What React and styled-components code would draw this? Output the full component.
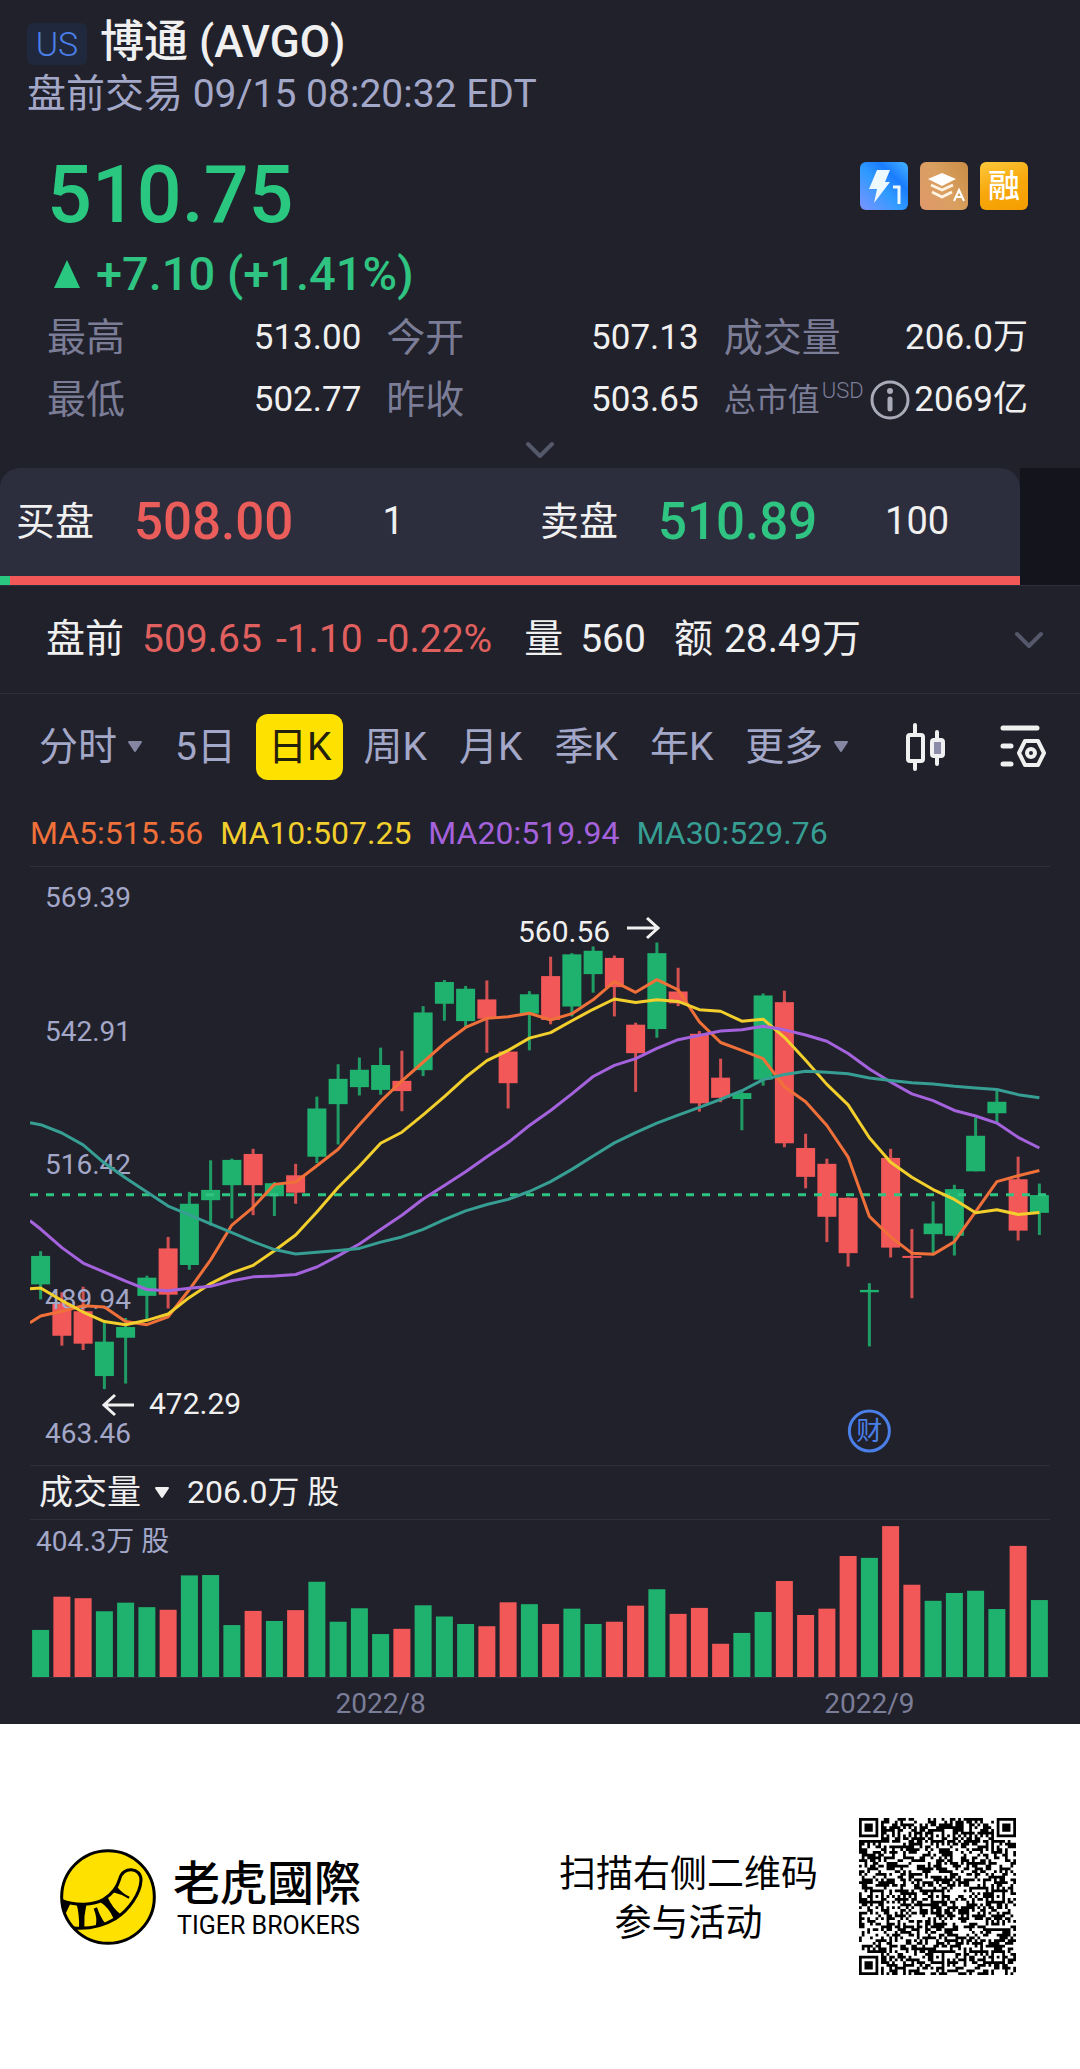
import React, { useState } from "react";
import styled, { createGlobalStyle } from "styled-components";

const GlobalStyle = createGlobalStyle`
  * {
    box-sizing: border-box;
  }
  body {
    margin: 0;
    background: #fff;
    font-family: Roboto, "Noto Sans CJK SC", sans-serif;
    font-weight: 400;
    line-height: 1.2;
    color: #f0f0f0;
  }
  button, select {
    font: inherit;
    color: inherit;
    border: 0;
    padding: 0;
    background: none;
    cursor: pointer;
  }
  svg {
    display: block;
  }
`;

const GREEN = "#1fb26e";
const RED = "#f25858";

/* ---------- header ---------- */

const Quote = styled.main`
  background: #21212b;
`;

const Header = styled.header`
  padding: 14px 27px 0;
`;

const TitleRow = styled.div`
  display: flex;
  align-items: center;
  gap: 13px;
  height: 56px;
`;

const Market = styled.span`
  width: 60px;
  height: 42px;
  margin-top: 4px;
  border-radius: 6px;
  background: #20283d;
  color: #4a7fe8;
  font-size: 34px;
  font-weight: 300;
  line-height: 42px;
  text-align: center;
`;

const Title = styled.h1`
  margin: 0;
  font-size: 44px;
  font-weight: 500;
  line-height: 56px;
`;

const Session = styled.div`
  color: #a3a7c8;
  font-size: 39px;
  line-height: 48px;
`;

const Summary = styled.section`
  padding: 28px 52px 0 47px;
`;

const PriceRow = styled.div`
  display: flex;
  justify-content: space-between;
  align-items: flex-start;
`;

const Price = styled.div`
  color: #2ac780;
  font-size: 79px;
  font-weight: 500;
  line-height: 98px;
`;

const Badges = styled.div`
  display: flex;
  gap: 12px;
  margin-top: 16px;
`;

const Badge = styled.span`
  width: 48px;
  height: 48px;
  border-radius: 6px;
  overflow: hidden;
  background: ${(p) => p.$fill};
  color: #fff;
  font-size: 32px;
  font-weight: 500;
  line-height: 48px;
  text-align: center;
`;

const Change = styled.div`
  display: flex;
  align-items: center;
  gap: 16px;
  margin-top: 2px;
  padding-left: 7px;
  color: #2fc481;
  font-size: 47px;
  font-weight: 500;
  line-height: 56px;
`;

const Stats = styled.dl`
  display: grid;
  grid-template-columns: 314fr 312fr 304fr;
  column-gap: 25px;
  margin: 5px 0 0;
`;

const Stat = styled.div`
  display: flex;
  align-items: center;
  justify-content: space-between;
  height: 62px;
  white-space: nowrap;
`;

const StatName = styled.dt`
  display: flex;
  align-items: center;
  gap: 2px;
  color: #7b7d97;
  font-size: ${(p) => (p.$small ? 32 : 39)}px;
`;

const Currency = styled.sup`
  align-self: flex-start;
  font-size: 22px;
  font-weight: 300;
  line-height: 22px;
  margin-right: 4px;
`;

const StatValue = styled.dd`
  margin: 0;
  font-size: 35px;
`;

const ExpandRow = styled.div`
  display: flex;
  justify-content: center;
  height: 37px;
`;

/* ---------- bid / ask ---------- */

const Depth = styled.section`
  background: #13141c;
  padding-right: 60px;
`;

const DepthPanel = styled.div`
  display: grid;
  grid-template-columns: 524fr 480fr;
  height: 108px;
  padding-left: 16px;
  border-radius: 20px 20px 0 0;
  background: #2d2e3d;
`;

const DepthCorner = styled.div`
  background: #21212b;
`;

const Side = styled.div`
  display: flex;
  align-items: center;
  font-size: 39px;
  white-space: nowrap;
`;

const SidePrice = styled.span`
  margin-left: 40px;
  color: ${(p) => (p.$up ? "#2fc481" : "#ea5d5b")};
  font-size: 51px;
  font-weight: 500;
`;

const SideSize = styled.span`
  width: 200px;
  font-size: 38px;
  text-align: center;
`;

const Ratio = styled.div`
  height: 9px;
  background: linear-gradient(to right, #2ac780 1%, ${RED} 1%);
`;

/* ---------- pre-market ---------- */

const PreMarket = styled.section`
  display: flex;
  align-items: center;
  height: 109px;
  padding: 0 36px 0 46px;
  border-top: 1px solid #2e2f3c;
  border-bottom: 1px solid #2e2f3c;
  font-size: 39px;
  white-space: nowrap;
`;

const PreValues = styled.span`
  display: flex;
  gap: 14px;
  margin: 0 32px 0 18px;
  color: #e0605f;
`;

const PreField = styled.span`
  display: flex;
  gap: ${(p) => p.$gap}px;
  margin-right: 28px;
`;

const ChevronButton = styled.button`
  display: flex;
  align-items: center;
  justify-content: center;
  width: 30px;
  margin-left: ${(p) => (p.$end ? "auto" : 0)};
`;

/* ---------- period tabs ---------- */

const Tabs = styled.nav`
  display: flex;
  align-items: center;
  gap: 8px;
  padding: 20px 34px 0 27px;
`;

const Tab = styled.button`
  display: flex;
  align-items: center;
  gap: 10px;
  height: 66px;
  padding: 0 12px;
  border-radius: 12px;
  background: ${(p) => (p.$active ? "#ffe100" : "transparent")};
  color: ${(p) => (p.$active ? "#24210a" : "#a3a7c8")};
  font-size: 39px;
  white-space: nowrap;
`;

const Tools = styled.div`
  display: flex;
  align-items: center;
  gap: 54px;
  margin-left: auto;
`;

const Averages = styled.div`
  display: flex;
  align-items: center;
  gap: 17px;
  height: 67px;
  margin: 20px 30px 0;
  border-bottom: 1px solid #2e2f3c;
  font-size: 32px;
  white-space: nowrap;
`;

const Average = styled.span`
  color: ${(p) => p.$color};
`;

/* ---------- charts ---------- */

const Plot = styled.svg`
  width: calc(100% - 60px);
  height: auto;
  margin: 0 30px;
`;

const AxisText = styled.text`
  fill: ${(p) => p.$color || "#a3a7c8"};
  font-size: 28px;
`;

const NoteText = styled.text`
  fill: #f0f0f0;
  font-size: 30px;
`;

const EventText = styled.text`
  fill: #4a7fe8;
  font-size: 26px;
`;

const VolumeHead = styled.div`
  display: flex;
  align-items: center;
  height: 55px;
  margin: 0 30px;
  padding-left: 9px;
  border-top: 1px solid #2e2f3c;
  border-bottom: 1px solid #2e2f3c;
  font-size: 32px;
`;

const VolumeSelect = styled.select`
  appearance: none;
  margin-right: 13px;
  font-size: 34px;
`;

const VolumeNow = styled.span`
  margin-left: 17px;
`;

/* ---------- footer ---------- */

const Footer = styled.footer`
  display: flex;
  align-items: center;
  justify-content: space-between;
  height: 345px;
  padding: 0 64px 0 60px;
  background: #fff;
  color: #000;
`;

const Brand = styled.div`
  display: flex;
  align-items: center;
  gap: 17px;
`;

const BrandText = styled.div`
  padding-top: 6px;
`;

const BrandName = styled.div`
  font-size: 47px;
  font-weight: 500;
  font-family: Roboto, "Noto Sans CJK TC", sans-serif;
  line-height: 52px;
`;

const BrandLatin = styled.div`
  padding-left: 4px;
  font-size: 25px;
  line-height: 32px;
`;

const Scan = styled.div`
  display: flex;
  align-items: center;
  gap: 41px;
  font-size: 37px;
  line-height: 49px;
  text-align: center;
`;

const ScanText = styled.div`
  padding-top: 4px;
`;

/* ---------- data ---------- */

const stats = [
  { name: "最高", value: "513.00" },
  { name: "今开", value: "507.13" },
  { name: "成交量", value: "206.0万" },
  { name: "最低", value: "502.77" },
  { name: "昨收", value: "503.65" },
  { name: "总市值", value: "2069亿", currency: "USD" },
];

const periods = [
  { label: "分时", menu: true },
  { label: "5日" },
  { label: "日K" },
  { label: "周K" },
  { label: "月K" },
  { label: "季K" },
  { label: "年K" },
  { label: "更多", menu: true },
];

// levels count down from the top rule of the chart to the bottom one
const TOP = 16;
const BOTTOM = 1529;
const WIDTH = 1020;
const HEIGHT = 598;

// up, high, body top, body bottom, low
const candles = [
  [1, 988, 1000, 1072, 1110],
  [0, 1092, 1120, 1202, 1227],
  [0, 1078, 1140, 1222, 1238],
  [1, 1170, 1217, 1304, 1337],
  [1, 1157, 1180, 1207, 1323],
  [1, 1050, 1055, 1101, 1165],
  [0, 952, 981, 1098, 1133],
  [1, 838, 868, 1023, 1035],
  [1, 758, 833, 859, 923],
  [1, 754, 757, 821, 905],
  [0, 729, 742, 821, 897],
  [1, 813, 816, 849, 899],
  [0, 767, 796, 840, 868],
  [1, 597, 627, 749, 765],
  [1, 515, 552, 616, 718],
  [1, 498, 529, 573, 594],
  [1, 473, 517, 580, 592],
  [0, 481, 557, 583, 634],
  [1, 368, 384, 530, 545],
  [1, 302, 307, 362, 405],
  [1, 317, 324, 406, 422],
  [0, 303, 351, 400, 486],
  [0, 483, 483, 563, 627],
  [1, 330, 338, 387, 480],
  [0, 243, 292, 403, 414],
  [1, 234, 237, 369, 394],
  [1, 217, 228, 287, 334],
  [0, 240, 246, 320, 394],
  [0, 410, 415, 487, 585],
  [1, 207, 234, 426, 448],
  [0, 271, 331, 361, 368],
  [0, 431, 438, 614, 635],
  [0, 501, 549, 600, 611],
  [1, 580, 588, 603, 682],
  [1, 336, 341, 554, 569],
  [0, 329, 358, 715, 725],
  [0, 691, 727, 800, 829],
  [0, 754, 767, 901, 965],
  [0, 852, 853, 993, 1027],
  [1, 1069, 1086, 1092, 1229],
  [0, 729, 752, 979, 1004],
  [0, 932, 1000, 1005, 1107],
  [1, 862, 918, 945, 996],
  [1, 820, 831, 949, 999],
  [1, 650, 696, 786, 786],
  [1, 582, 610, 639, 662],
  [0, 749, 806, 936, 961],
  [1, 817, 846, 891, 947],
];

// first value is the level at the left edge, then one per candle
const averages = [
  {
    label: "MA5:515.56",
    color: "#f0703a",
    levels: [
      1169, 1152, 1140, 1126, 1129, 1166, 1174, 1154, 1085, 1010, 922, 877, 819,
      813, 772, 730, 668, 609, 557, 510, 462, 422, 399, 395, 386, 403, 387, 352,
      306, 333, 301, 327, 408, 460, 480, 501, 572, 610, 670, 750, 900, 952, 993,
      996, 964, 888, 812, 797, 784,
    ],
  },
  {
    label: "MA10:507.25",
    color: "#f2cf2c",
    levels: [
      1083, 1081, 1113, 1142, 1166, 1174, 1163, 1147, 1105, 1070, 1043, 1024,
      987, 947, 889, 827, 773, 715, 687, 643, 597, 548, 506, 480, 449, 435, 405,
      376, 350, 359, 352, 356, 377, 381, 406, 401, 447, 505, 566, 618, 701, 763,
      801, 832, 857, 891, 883, 895, 890,
    ],
  },
  {
    label: "MA20:519.94",
    color: "#a462dc",
    levels: [
      911, 932, 979, 1018, 1041, 1064, 1085, 1088, 1082, 1077, 1063, 1053, 1051,
      1047, 1028, 1000, 970, 933, 897, 856, 822, 787, 749, 713, 670, 632, 590,
      546, 518, 501, 475, 453, 442, 431, 428, 419, 428, 441, 457, 488, 527, 560,
      590, 607, 632, 646, 664, 700, 727,
    ],
  },
  {
    label: "MA30:529.76",
    color: "#369e93",
    levels: [
      663, 668, 689, 719, 765, 803, 838, 874, 896, 919, 941, 964, 984, 995, 991,
      986, 981, 965, 952, 933, 908, 886, 870, 857, 837, 812, 781, 747, 714, 688,
      664, 644, 624, 604, 582, 554, 541, 533, 535, 539, 550, 556, 562, 565, 571,
      575, 579, 592, 600,
    ],
  },
];

const axis = [
  ["569.39", 116],
  ["542.91", 455],
  ["516.42", 794],
  ["489.94", 1134],
  ["463.46", 1473],
];

// in units of 10,000 shares
const volumes = [
  126, 215, 211, 176, 199, 187, 180, 272, 273, 139, 177, 150, 179, 255, 148,
  184, 115, 129, 192, 162, 142, 136, 200, 195, 142, 183, 142, 148, 191, 235,
  169, 185, 89, 118, 174, 257, 166, 183, 324, 319, 404, 247, 204, 225, 231, 182,
  351, 206,
];

const SLOT = WIDTH / candles.length;
const centerX = (i) => SLOT * (i + 0.5);
const toY = (level) => ((level - TOP) * HEIGHT) / (BOTTOM - TOP);

const Chevron = () => (
  <svg width="30" height="18" viewBox="0 0 30 18" fill="none">
    <path
      d="M3 3l12 12L27 3"
      stroke="#55576a"
      strokeWidth="4"
      strokeLinecap="round"
      strokeLinejoin="round"
    />
  </svg>
);

const Caret = ({ color }) => (
  <svg width="16" height="12" viewBox="0 0 16 12">
    <path
      d="M2 1h12L8 10z"
      fill={color}
      stroke={color}
      strokeWidth="2"
      strokeLinejoin="round"
    />
  </svg>
);

const CandleChart = () => (
  <Plot viewBox={`0 0 ${WIDTH} ${HEIGHT}`} role="img" aria-label="日K">
    {candles.map(([up, high, top, bottom, low], i) => (
      <g key={i} fill={up ? GREEN : RED}>
        <rect
          x={centerX(i) - 1.5}
          y={toY(high)}
          width="3"
          height={toY(low) - toY(high)}
          opacity="0.85"
        />
        <rect
          x={centerX(i) - 9.5}
          y={toY(top)}
          width="19"
          height={toY(bottom) - toY(top)}
        />
      </g>
    ))}
    <path
      d={`M0 ${toY(845)}H1016`}
      stroke="#2fc481"
      strokeWidth="3"
      strokeDasharray="8 8"
    />
    {axis.map(([label, level]) => (
      <AxisText key={label} x="15" y={toY(level)}>
        {label}
      </AxisText>
    ))}
    {averages.map(({ label, color, levels }) => (
      <polyline
        key={label}
        fill="none"
        stroke={color}
        strokeWidth="3"
        strokeLinejoin="round"
        points={levels
          .map((level, i) => `${i ? centerX(i - 1) : 0},${toY(level)}`)
          .join(" ")}
      />
    ))}
    <g fill="none" stroke="#f0f0f0" strokeWidth="3">
      <path d="M597 61h30M617 51l11 10-11 10" />
      <path d="M104 538H74M85 528l-11 10 11 10" />
    </g>
    <NoteText x="488" y="75">
      560.56
    </NoteText>
    <NoteText x="119" y="547">
      472.29
    </NoteText>
    <circle
      cx={centerX(39)}
      cy="564"
      r="20"
      fill="none"
      stroke="#4a7fe8"
      strokeWidth="3"
    />
    <EventText x={centerX(39)} y="573" textAnchor="middle">
      财
    </EventText>
  </Plot>
);

const VolumeChart = () => (
  <Plot viewBox={`0 0 ${WIDTH} 204`} role="img" aria-label="成交量">
    <path d={`M0 157.5H${WIDTH}`} stroke="#2e2f3c" />
    {volumes.map((v, i) => {
      const h = (v / 404.3) * 151;
      return (
        <rect
          key={i}
          x={centerX(i) - 8.5}
          y={157 - h}
          width="17"
          height={h}
          fill={candles[i][0] ? GREEN : RED}
        />
      );
    })}
    <AxisText x="6" y="31">
      404.3万 股
    </AxisText>
    <AxisText x={centerX(16)} y="193" textAnchor="middle" $color="#7b7d97">
      2022/8
    </AxisText>
    <AxisText x={centerX(39)} y="193" textAnchor="middle" $color="#7b7d97">
      2022/9
    </AxisText>
  </Plot>
);

const BoltIcon = () => (
  <svg width="48" height="48" viewBox="0 0 48 48">
    <path d="M17 8h13l-5 12h5L14 41l3-14H9z" fill="#eef8ff" />
    <path d="M33 25h6v17" fill="none" stroke="#eef8ff" strokeWidth="3" />
  </svg>
);

const LayersIcon = () => (
  <svg width="48" height="48" viewBox="0 0 48 48" fill="none">
    <path d="M22 11l14 6-14 7-14-7z" fill="#fff" />
    <path
      d="M11 23l11 5 11-5M12 30l10 5 10-5"
      stroke="#fff3e4"
      strokeWidth="3"
      strokeLinejoin="round"
    />
    <path d="M34 39l5-11 5 11M36 35h6" stroke="#fff" strokeWidth="2" />
  </svg>
);

const InfoIcon = () => (
  <svg width="40" height="40" viewBox="0 0 40 40" fill="none">
    <circle cx="20" cy="20" r="18" stroke="#a9abb8" strokeWidth="3" />
    <circle cx="20" cy="11" r="3" fill="#a9abb8" />
    <path d="M20 19v10" stroke="#a9abb8" strokeWidth="5" strokeLinecap="round" />
  </svg>
);

const CandleIcon = () => (
  <svg width="40" height="48" viewBox="0 0 40 48" fill="none">
    <g stroke="#f0f0f0" strokeWidth="4" strokeLinecap="round">
      <path d="M9 2v8M9 39v7M31 9v6M31 34v7" />
      <rect x="2" y="12" width="15" height="26" rx="2" />
      <rect x="26" y="17" width="11" height="16" rx="2" fill="#8b8dab" />
    </g>
  </svg>
);

const SettingsIcon = () => (
  <svg width="46" height="44" viewBox="0 0 46 44" fill="none">
    <g stroke="#f0f0f0" strokeLinecap="round" strokeLinejoin="round">
      <path d="M3 3h34M3 21h8M3 39h8" strokeWidth="5" />
      <path d="M25 16h13l6 12-6 12H25l-6-12z" strokeWidth="4" />
      <circle cx="31" cy="28" r="4" strokeWidth="4" />
    </g>
  </svg>
);

const TigerLogo = () => (
  <svg width="96" height="96" viewBox="59 86 288 288">
    <circle cx="203" cy="230" r="139" fill="#ffe100" stroke="#000" strokeWidth="9" />
    <path
      d="M64 240C108 258 160 254 190 237C216 221 230 205 238 176C247 136 303 140 302 180C300 218 268 268 225 295C190 316 150 327 100 323"
      fill="none"
      stroke="#000"
      strokeWidth="9"
    />
    <path d="M64 238l26 12-18 38zM108 248h31q-9 38-7 76h-16q2-40-8-76zM160 265l10-4q10 30 24 47l-28 10q6-26-6-53zM178 244l24-13q14 32 38 50l-20 14q-14-34-42-51zM218 216l12-17q16 20 38 30l-3 6q-24-14-47-19z" />
  </svg>
);

/* ---------- QR code ---------- */

const QR = 57;
const ALIGN = [6, 28, 50];

// ring pattern: dark centre, light ring, dark border
const ring = (dx, dy, core) => {
  const d = Math.max(Math.abs(dx), Math.abs(dy));
  return d <= core || d === core + 2;
};

const qrPath = () => {
  let seed = 20220915;
  const noise = () => {
    seed = (seed * 1103515245 + 12345) % 2147483648;
    return seed / 2147483648 > 0.5;
  };
  const isDark = (x, y) => {
    const random = noise();
    const finders = [
      [3, 3],
      [QR - 4, 3],
      [3, QR - 4],
    ];
    for (const [cx, cy] of finders) {
      if (Math.max(Math.abs(x - cx), Math.abs(y - cy)) <= 4) {
        return ring(x - cx, y - cy, 1);
      }
    }
    for (const cx of ALIGN) {
      for (const cy of ALIGN) {
        if (Math.max(Math.abs(x - cx), Math.abs(y - cy)) <= 2) {
          return ring(x - cx, y - cy, 0);
        }
      }
    }
    if (x === 6 || y === 6) return (x + y) % 2 === 0;
    return random;
  };
  let d = "";
  for (let y = 0; y < QR; y++) {
    for (let x = 0; x < QR; x++) {
      if (isDark(x, y)) d += `M${x} ${y}h1v1h-1z`;
    }
  }
  return d;
};

const QrCode = () => (
  <svg width="157" height="157" viewBox={`0 0 ${QR} ${QR}`} role="img" aria-label="二维码">
    <path d={qrPath()} fill="#000" />
  </svg>
);

const App = () => {
  const [period, setPeriod] = useState("日K");

  return (
    <>
      <GlobalStyle />
      <Quote>
        <Header>
          <TitleRow>
            <Market>US</Market>
            <Title>博通 (AVGO)</Title>
          </TitleRow>
          <Session>盘前交易 09/15 08:20:32 EDT</Session>
        </Header>

        <Summary>
          <PriceRow>
            <Price>510.75</Price>
            <Badges>
              <Badge $fill="linear-gradient(45deg, #7c93ff, #2f9bff 45%, #1a7cff 70%, #46b4ff)">
                <BoltIcon />
              </Badge>
              <Badge $fill="linear-gradient(60deg, #e0986c, #d9a060 50%, #c98d45)">
                <LayersIcon />
              </Badge>
              <Badge $fill="linear-gradient(160deg, #fcc93c, #f8a80c 50%, #f59d00)">融</Badge>
            </Badges>
          </PriceRow>
          <Change>
            <svg width="26" height="28" viewBox="0 0 26 28">
              <path d="M13 0l13 28H0z" fill="#2ac780" />
            </svg>
            +7.10 (+1.41%)
          </Change>
          <Stats>
            {stats.map(({ name, value, currency }) => (
              <Stat key={name}>
                <StatName $small={currency}>
                  {name}
                  {currency && (
                    <>
                      <Currency>{currency}</Currency>
                      <button aria-label="总市值说明">
                        <InfoIcon />
                      </button>
                    </>
                  )}
                </StatName>
                <StatValue>{value}</StatValue>
              </Stat>
            ))}
          </Stats>
        </Summary>
        <ExpandRow>
          <ChevronButton aria-label="展开行情">
            <Chevron />
          </ChevronButton>
        </ExpandRow>

        <Depth>
          <DepthCorner>
            <DepthPanel>
              <Side>
                买盘
                <SidePrice>508.00</SidePrice>
                <SideSize>1</SideSize>
              </Side>
              <Side>
                卖盘
                <SidePrice $up>510.89</SidePrice>
                <SideSize>100</SideSize>
              </Side>
            </DepthPanel>
          </DepthCorner>
          <Ratio />
        </Depth>

        <PreMarket>
          <span>盘前</span>
          <PreValues>
            <span>509.65</span>
            <span>-1.10</span>
            <span>-0.22%</span>
          </PreValues>
          <PreField $gap={17}>
            <span>量</span>
            <span>560</span>
          </PreField>
          <PreField $gap={11}>
            <span>额</span>
            <span>28.49万</span>
          </PreField>
          <ChevronButton $end aria-label="展开盘前">
            <Chevron />
          </ChevronButton>
        </PreMarket>

        <Tabs>
          {periods.map(({ label, menu }) => (
            <Tab
              key={label}
              $active={label === period}
              aria-pressed={label === period}
              onClick={() => setPeriod(label)}
            >
              {label}
              {menu && <Caret color="#8486a2" />}
            </Tab>
          ))}
          <Tools>
            <button aria-label="K线样式">
              <CandleIcon />
            </button>
            <button aria-label="指标设置">
              <SettingsIcon />
            </button>
          </Tools>
        </Tabs>

        <Averages>
          {averages.map(({ label, color }) => (
            <Average key={label} $color={color}>
              {label}
            </Average>
          ))}
        </Averages>
        <CandleChart />

        <VolumeHead>
          <VolumeSelect aria-label="副图指标" defaultValue="成交量">
            <option>成交量</option>
          </VolumeSelect>
          <Caret color="#f0f0f0" />
          <VolumeNow>206.0万 股</VolumeNow>
        </VolumeHead>
        <VolumeChart />
      </Quote>

      <Footer>
        <Brand>
          <TigerLogo />
          <BrandText>
            <BrandName>老虎國際</BrandName>
            <BrandLatin>TIGER BROKERS</BrandLatin>
          </BrandText>
        </Brand>
        <Scan>
          <ScanText>
            扫描右侧二维码
            <br />
            参与活动
          </ScanText>
          <QrCode />
        </Scan>
      </Footer>
    </>
  );
};

export default App;
